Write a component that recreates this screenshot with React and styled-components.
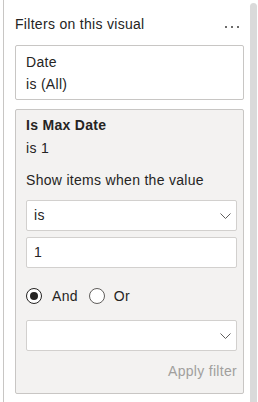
import React from "react";
import styled, { createGlobalStyle } from "styled-components";

const GlobalStyle = createGlobalStyle`
  html, body {
    margin: 0;
    padding: 0;
    background: #ffffff;
  }
  * {
    box-sizing: border-box;
  }
`;

const Page = styled.div`
  display: flex;
  width: 258px;
  height: 402px;
  overflow: hidden;
  font-family: "Segoe UI", "Liberation Sans", Arial, sans-serif;
  font-size: 14px;
  letter-spacing: 0.3px;
  color: #252423;
`;

const Pane = styled.div`
  display: flex;
  flex-direction: column;
  width: 244px;
  margin-left: 3px;
  border-left: 1px solid #c8c6c4;
  padding: 14px 3px 0 11px;
`;

const Header = styled.div`
  display: flex;
  align-items: flex-start;
  justify-content: space-between;
  height: 20px;
  line-height: 20px;
  margin-bottom: 11px;
`;

const Title = styled.span`
  font-size: 14px;
`;

const More = styled.div`
  display: flex;
  gap: 4px;
  margin-top: 12px;
  padding-right: 5px;
`;

const Dot = styled.span`
  width: 2px;
  height: 2px;
  border-radius: 50%;
  background: #3b3a39;
`;

const Card = styled.div`
  display: flex;
  flex-direction: column;
  border: 1px solid #c8c6c4;
  border-radius: 2px;
  background: ${(p) => (p.$expanded ? "#f3f2f1" : "#ffffff")};
  padding: ${(p) => (p.$expanded ? "4px 6px 10px 10px" : "5px 10px 4px 10px")};
  margin-bottom: 9px;
  line-height: ${(p) => (p.$expanded ? "23px" : "22px")};
`;

const CardTitle = styled.div`
  font-weight: ${(p) => (p.$bold ? 700 : 400)};
`;

const Label = styled.div`
  margin-top: 9px;
  margin-bottom: 8px;
`;

const Field = styled.div`
  display: flex;
  align-items: center;
  justify-content: space-between;
  height: 31px;
  margin-bottom: ${(p) => p.$gap || 0}px;
  padding: 0 5px 0 7px;
  background: #ffffff;
  border: 1px solid #d2d0ce;
  border-radius: 2px;
`;

const Radios = styled.div`
  display: flex;
  align-items: center;
  height: 16px;
  margin: 20px 0 16px;
`;

const Radio = styled.span`
  position: relative;
  flex: none;
  width: 16px;
  height: 16px;
  border-radius: 50%;
  border: 1px solid ${(p) => (p.$checked ? "#252423" : "#605e5c")};
  margin-right: ${(p) => (p.$checked ? 10 : 9)}px;
  background: #ffffff;
  &::after {
    content: "";
    display: ${(p) => (p.$checked ? "block" : "none")};
    position: absolute;
    inset: 3px;
    border-radius: 50%;
    background: #252423;
  }
`;

const RadioLabel = styled.span`
  margin-right: 11px;
`;

const Apply = styled.div`
  text-align: right;
  color: #a19f9d;
  margin-top: 9px;
`;

const Scrollbar = styled.div`
  width: 7px;
  margin-top: 3px;
  margin-left: 3px;
  background: #dadada;
  border-radius: 4px 4px 0 0;
`;

const Edge = styled.div`
  flex: 1;
  margin-left: 1px;
  background: linear-gradient(#c8c6c4, #c8c6c4) no-repeat 2px 0 / 1px 34px,
    #f0f0f0;
`;

const Chevron = () => (
  <svg width="11" height="6" viewBox="0 0 11 6" fill="none">
    <polyline points="0.5,0.5 5.5,5.5 10.5,0.5" stroke="#605e5c" strokeWidth="1" />
  </svg>
);

export default function App() {
  return (
    <>
      <GlobalStyle />
      <Page>
        <Pane>
          <Header>
            <Title>Filters on this visual</Title>
            <More>
              <Dot />
              <Dot />
              <Dot />
            </More>
          </Header>
          <Card>
            <CardTitle>Date</CardTitle>
            <div>is (All)</div>
          </Card>
          <Card $expanded>
            <CardTitle $bold>Is Max Date</CardTitle>
            <div>is 1</div>
            <Label>Show items when the value</Label>
            <Field $gap={6}>
              <span>is</span>
              <Chevron />
            </Field>
            <Field>
              <span>1</span>
            </Field>
            <Radios>
              <Radio $checked />
              <RadioLabel>And</RadioLabel>
              <Radio />
              <RadioLabel>Or</RadioLabel>
            </Radios>
            <Field>
              <span />
              <Chevron />
            </Field>
            <Apply>Apply filter</Apply>
          </Card>
        </Pane>
        <Scrollbar />
        <Edge />
      </Page>
    </>
  );
}
